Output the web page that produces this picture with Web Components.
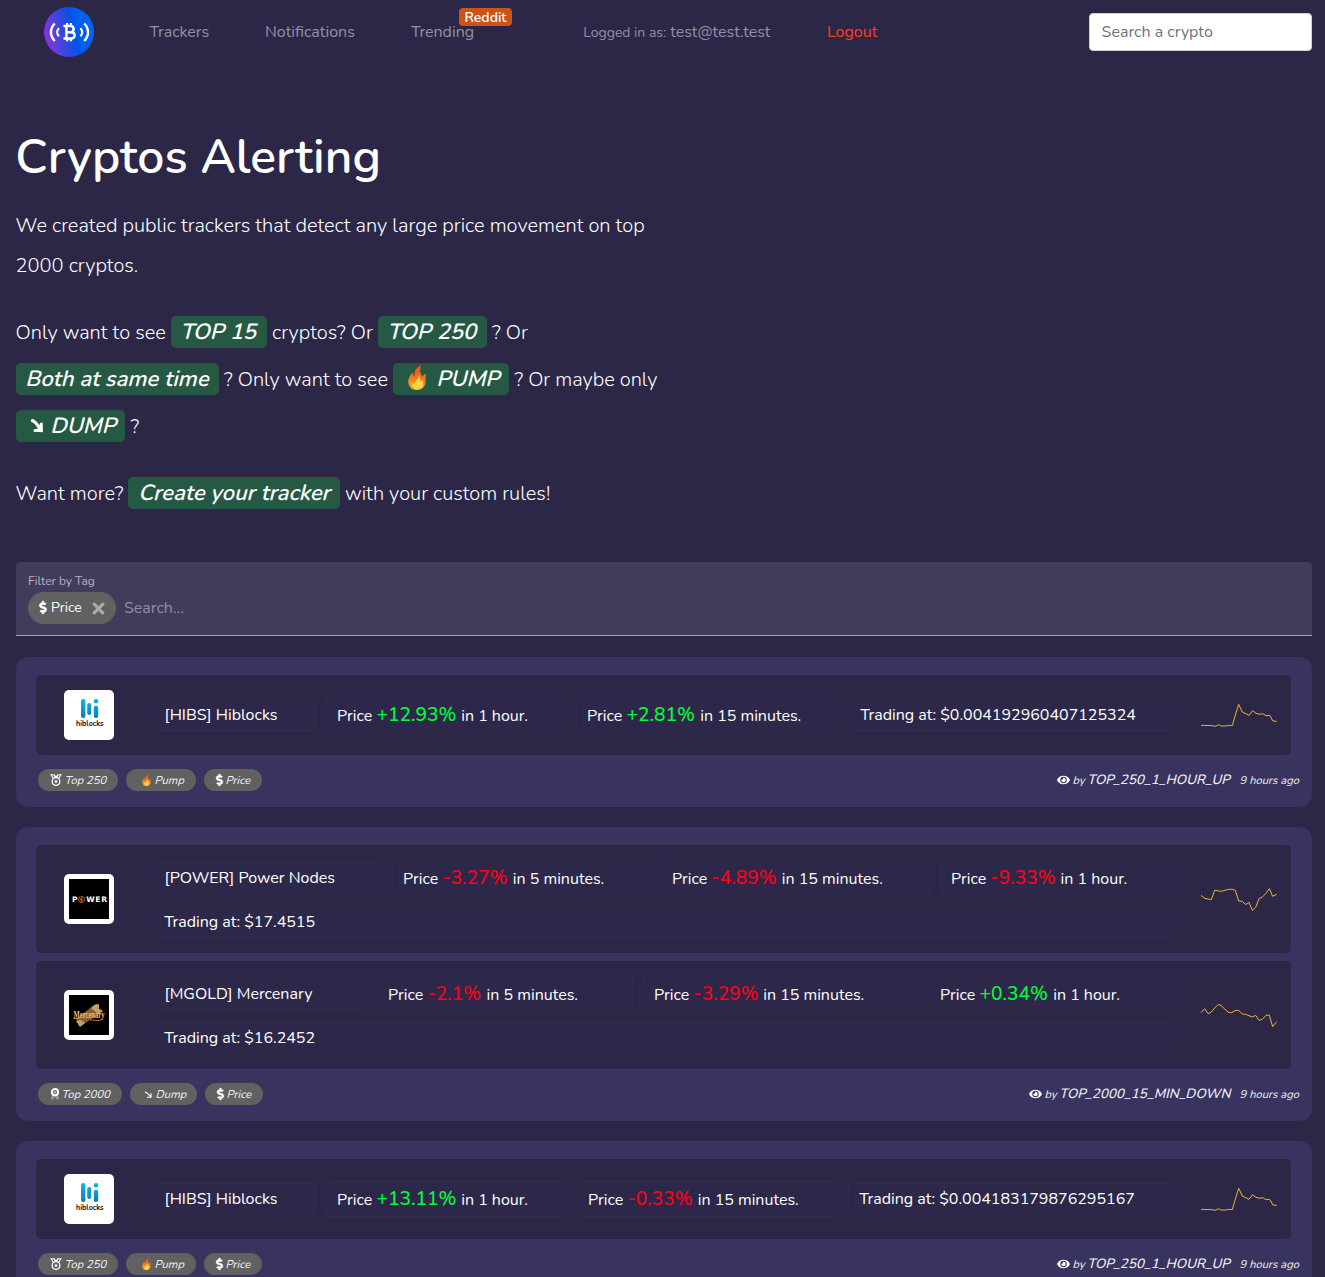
<!DOCTYPE html>
<html lang="en"><head><meta charset="utf-8"><title>Cryptos Alerting</title>
<style>
html,body{margin:0;height:1277px;overflow:hidden;background:#2c2747}
body{font:16px/24px Nunito,Lato,"Open Sans",sans-serif;color:#fff}
</style></head><body><crypto-app></crypto-app>
<script>
const ICONS={
dollar:'<svg viewBox="0 0 288 512" width="100%" height="100%" overflow="visible"><path fill="#fff" stroke="#fff" stroke-width="20" d="M209.2 233.4l-108-31.6C88.7 198.2 80 186.5 80 173.5c0-16.3 13.2-29.5 29.5-29.5h66.3c12.2 0 24.2 3.7 34.2 10.5 6.1 4.1 14.3 3.1 19.5-2l34.8-34c7.1-6.9 6.1-18.4-1.8-24.5C238 74.8 207.4 64.1 176 64V16c0-8.8-7.2-16-16-16h-32c-8.8 0-16 7.2-16 16v48h-2.5C45.8 64-5.4 118.7.5 183.6c4.2 46.1 39.4 83.6 83.8 96.6l102.5 30c12.5 3.7 21.2 15.3 21.2 28.3 0 16.3-13.2 29.5-29.5 29.5h-66.3C100 368 88 364.3 78 357.5c-6.1-4.1-14.3-3.1-19.5 2l-34.8 34c-7.1 6.9-6.1 18.4 1.8 24.5 24.5 19.2 55.1 29.9 86.5 30v48c0 8.8 7.2 16 16 16h32c8.8 0 16-7.2 16-16v-48.2c46.6-.9 90.3-28.6 105.7-72.7 21.5-61.6-14.6-124.8-72.5-141.7z"/></svg>',
eye:'<svg viewBox="0 0 576 512" width="100%" height="100%"><path fill="#fff" d="M572.52 241.4C518.29 135.59 410.93 64 288 64S57.68 135.64 3.48 241.41a32.35 32.35 0 0 0 0 29.19C57.71 376.41 165.07 448 288 448s230.32-71.64 284.52-177.41a32.35 32.35 0 0 0 0-29.19zM288 400a144 144 0 1 1 144-144 143.93 143.93 0 0 1-144 144zm0-240a95.31 95.31 0 0 0-25.31 3.79 47.85 47.85 0 0 1-66.9 66.9A95.78 95.78 0 1 0 288 160z"/></svg>',
flame:'<svg viewBox="0 0 24 32" width="100%" height="100%"><defs><linearGradient id="f" x1=".6" y1="0" x2=".4" y2="1"><stop stop-color="#e8481d"/><stop offset=".55" stop-color="#f47a20"/><stop offset="1" stop-color="#fba62c"/></linearGradient></defs><path fill="url(#f)" d="M18 0C10 3 8 9 9 15 7 14 6 11 7 9 3 13 0 18 1 23c1 6 5 9 11 9s11-4 11-11c0-4 0-7 1-10-3 1-4 2-5 4C16 11 15 5 18 0z"/><path fill="#ffd447" d="M14 13c1 5-5 6-5 11-2 0-3-1-3-3-2 5 1 9 6 10 5 0 8-3 8-7 0-2-1-4-1-5-1 1-2 2-3 2 0-3 0-6-2-8z"/></svg>',
arrow:'<svg viewBox="0 0 14 14" width="100%" height="100%"><path d="M1.2 .8C5 2.5 7.5 5.5 9.5 9" fill="none" stroke="#fff" stroke-width="3.3"/><path fill="#fff" d="M12.6 3.4 13 13.2 3.6 12.8 3.8 10.4 8.6 9.3 10 4z"/></svg>',
thin:'<svg viewBox="0 0 10 10" width="100%" height="100%"><path d="M1 2C4 3.5 6 5.5 7.6 7.6M7.8 3.5V8H3.4" fill="none" stroke="#fff" stroke-width="1.2"/></svg>',
medal:'<svg viewBox="0 0 12 12" width="100%" height="100%"><g fill="none" stroke="#fff"><circle cx="6" cy="7.5" r="3.8" stroke-width="1.3"/><path d="M.5 .7H4L5 2.8 6 3.2 7 2.8 8 .7h3.5M1 .8 3.5 4.5M11 .8 8.5 4.5M4 .7 6 3 8 .7" stroke-width="1.1"/></g><path fill="#fff" d="M6 5.5l.6 1.2 1.3.2-1 .9.3 1.3L6 8.5l-1.2.6.3-1.3-1-.9 1.3-.2z"/></svg>',
rosette:'<svg viewBox="0 0 10 12" width="100%" height="100%"><path fill="#999" d="M2.2 7 .6 11.2l1.8-.3L3.4 12 5 8.2 6.6 12l1-1.1 1.8.3L7.8 7z"/><circle cx="5" cy="4.2" r="3.1" fill="#616161" stroke="#fff" stroke-width="2"/><circle cx="5" cy="4.2" r="1.2" fill="#bbb"/></svg>',
close:'<svg viewBox="0 0 13 13" width="100%" height="100%"><path d="M2.2 2.2 10.8 10.8M10.8 2.2 2.2 10.8" stroke="#aaa" stroke-width="3.2" stroke-linecap="round"/></svg>'
};
function define(name,render){customElements.define(name,class extends HTMLElement{
 connectedCallback(){if(!this.shadowRoot)this.attachShadow({mode:'open'}).innerHTML=render(this);}
});}
/* A run of text in a fixed measure; --slant leans it. */
define('fit-text',e=>`<style>:host{display:inline-block;white-space:pre;flex:none;width:${e.getAttribute('w')}px}span{display:inline-block;transform:var(--slant,none);transform-origin:0 74%}</style><span><slot></slot></span>`);
define('ui-icon',e=>`<style>:host{display:block;flex:none;width:${e.getAttribute('w')}px;height:${e.getAttribute('h')}px}svg{display:block}</style>${ICONS[e.getAttribute('name')]}`);
define('app-logo',()=>`<style>:host{display:block;width:50px;height:50px}svg{display:block}</style>
<svg width="50" height="50" viewBox="0 0 50 50"><defs><linearGradient id="g" x1="0" y1=".62" x2="1" y2=".4"><stop stop-color="#8b34d8"/><stop offset=".62" stop-color="#0053e8"/><stop offset=".64" stop-color="#005cf0"/><stop offset="1" stop-color="#0064f0"/></linearGradient></defs><circle cx="25" cy="25" r="25" fill="url(#g)"/>
<g fill="none" stroke="#fff" stroke-width="2.2"><path d="M10.8 16.5C5.7 21.5 5.7 29 10.8 34M40.2 16.5c5.1 5 5.1 12.5 0 17.5" stroke-width="2.4"/><path d="M15 21.2c-2.4 2.4-2.4 5.6 0 8M36.4 21.2c2.4 2.4 2.4 5.6 0 8"/><g transform="translate(-.6)"><path d="M20 19H27C31.3 19 31.3 25.2 27 25.2H23M20 31.5H27.5C32.5 31.5 32.5 25.2 27.5 25.2M23 19v12.5" stroke-width="2.5"/><path d="M23.8 16v3M27.6 16v3M23.8 31v3.2M27.6 31v3.2"/></g></g></svg>`);
define('nav-bar',()=>`<style>:host{display:flex;height:64px;align-items:center;color:#9391a3;line-height:24px;box-sizing:border-box;padding:0 13px 0 44px}
.item{position:relative;display:flex}.badge{position:absolute;left:48px;top:-12px;width:53px;height:18px;border-radius:4px;background:#cd5416;color:#fff;font-weight:600;font-size:14px;line-height:19px;text-align:center}
.search{margin-left:auto;width:223px;height:38px;box-sizing:border-box;border:1px solid #ced4da;border-radius:4px;background:#fff;color:#6c757d;padding:6px 11.6px}small{font-size:14px}</style>
<app-logo></app-logo><span class="item" style="margin-left:55.6px"><fit-text w="60">Trackers</fit-text></span><span class="item" style="margin-left:55.4px"><fit-text w="91">Notifications</fit-text></span>
<span class="item" style="margin-left:55px"><fit-text w="64">Trending</fit-text><span class="badge">Reddit</span></span>
<span class="item" style="margin-left:108.2px;align-items:baseline;gap:4px"><small><fit-text w="83">Logged in as:</fit-text></small><fit-text w="101">test@test.test</fit-text></span>
<span class="item" style="margin-left:55.8px;color:#ff3c22"><fit-text w="51">Logout</fit-text></span><div class="search"><fit-text w="111">Search a crypto</fit-text></div>`);
define('hero-tag',e=>`<style>:host{--slant:skewX(-14deg);display:flex;gap:8px;box-sizing:border-box;width:${e.getAttribute('w')}px;height:32px;border-radius:5px;background:#255943;font:600 22px/32px Nunito,Lato,sans-serif;padding-left:9.5px;color:#fff;flex:none}</style><slot></slot>`);
define('hero-intro',()=>`<style>:host{display:block;padding:64px 16px 0 15.6px;height:434px;font-weight:300;font-size:20px}
h1{font-size:48px;line-height:58px;font-weight:600;margin:0 0 20px -.4px}p{margin:0;line-height:40px}.row{display:flex;height:47px;gap:5px;line-height:33px}.first{margin-top:30px}.last{margin-top:20px}.lead{margin-left:.4px}ui-icon{margin-top:3px}</style>
<h1><fit-text w="366">Cryptos Alerting</fit-text></h1>
<p><fit-text w="629">We created public trackers that detect any large price movement on top</fit-text><br><fit-text w="123">2000 cryptos.</fit-text></p>
<div class="row first"><fit-text w="150.4">Only want to see</fit-text><hero-tag w="96"><fit-text w="77">TOP 15</fit-text></hero-tag><fit-text w="101">cryptos? Or</fit-text><hero-tag w="109"><fit-text w="89">TOP 250</fit-text></hero-tag><fit-text w="37">? Or</fit-text></div>
<div class="row"><hero-tag class="lead" w="203"><fit-text w="184">Both at same time</fit-text></hero-tag><fit-text w="164">? Only want to see</fit-text><hero-tag w="116"><ui-icon name="flame" w="24" h="25" style="margin:2px -1.3px 0 2.4px"></ui-icon><fit-text w="66">PUMP</fit-text></hero-tag><fit-text w="145" style="margin-left:.4px">? Or maybe only</fit-text></div>
<div class="row"><hero-tag class="lead" w="109"><ui-icon name="arrow" w="14" h="14" style="margin:9px -2.4px 0 4.5px"></ui-icon><fit-text w="66">DUMP</fit-text></hero-tag><fit-text w="12" style="margin-left:.4px">?</fit-text></div>
<div class="row last"><fit-text w="107.4">Want more?</fit-text><hero-tag w="212"><fit-text w="193" style="margin-left:.5px">Create your tracker</fit-text></hero-tag><fit-text w="206">with your custom rules!</fit-text></div>`);
define('tag-filter',()=>`<style>:host{display:block;box-sizing:border-box;margin:0 13px 0 16px;height:74px;border-radius:4px 4px 0 0;background:#433b5b;border-bottom:1px solid #aaa5b7;padding:10px 12px}.label{font-size:12px;line-height:18px;height:20px;color:#b6b2c1}.line{display:flex;gap:8px;align-items:center;color:#928da1}.chip{display:flex;align-items:center;width:88px;height:32px;box-sizing:border-box;border-radius:16px;background:#616161;color:#fff;font-size:14px;padding:0 11px}</style>
<div class="label"><fit-text w="67">Filter by Tag</fit-text></div><div class="line"><span class="chip"><ui-icon name="dollar" w="8" h="13" style="margin:-1px 0 0 .3px"></ui-icon><fit-text w="31" style="margin-left:3.7px">Price</fit-text><ui-icon name="close" w="13" h="13" style="margin:1px 0 0 9.7px"></ui-icon></span><fit-text w="60">Search...</fit-text></div>`);
const LOGOS={
hibs:'<rect width="50" height="50" rx="5" fill="#fff"/><defs><linearGradient id="h" gradientUnits="userSpaceOnUse" x1="0" y1="9" x2="0" y2="28"><stop stop-color="#10b9df"/><stop offset="1" stop-color="#087db9"/></linearGradient></defs><g fill="url(#h)"><rect x="17" y="9" width="4.4" height="19" rx="2"/><rect x="23.2" y="13" width="4" height="12" rx="2"/><rect x="29.8" y="15.7" width="4.4" height="12.3" rx="2"/><circle cx="32" cy="11.3" r="2.3"/></g><text x="12" y="36.4" font-size="6.8" font-weight="700" font-family="Nunito,sans-serif" textLength="27.5" lengthAdjust="spacingAndGlyphs" fill="#111">hiblocks</text>',
power:'<rect width="50" height="50" rx="5" fill="#fff"/><path d="M5 5h40v40H5z"/><g font-family="DejaVu Sans,sans-serif" font-weight="700" font-size="7.6" fill="#fff"><text x="8" y="28">P</text><text x="22.2" y="28" textLength="21" lengthAdjust="spacing">WER</text></g><circle cx="17.6" cy="25.5" r="3" fill="none" stroke="#b95c25" stroke-width="1.2" stroke-dasharray="2 .6"/><path d="m18.2 23.2-1.8 2.5h2l-1.2 2.4" fill="none" stroke="#f28a32" stroke-width=".9"/>',
gold:'<rect width="50" height="50" rx="5" fill="#fff"/><path d="M5 5h40v40H5z"/><path fill="#80612f" d="m12 29 18-14 5-1v5l4 2-19 13-5 2-1-4z"/><path fill="#c4a267" d="m27 18 5-4 3 1v4l4 2-5 3zM12 31l5-1 4 3-5 4z"/><path fill="none" stroke="#d07a3c" d="M26 30c3-1 9 3 13-2M9.5 28.5h6"/><text x="9.5" y="28" font-family="Liberation Serif,serif" font-weight="700" font-size="10.5" textLength="31" lengthAdjust="spacingAndGlyphs" fill="#f2bb75">Mercenary</text>'};
define('coin-logo',e=>`<style>:host,svg{display:block;width:50px;height:50px;flex:none;overflow:visible}</style><svg viewBox="0 0 50 50">${LOGOS[e.getAttribute('name')]}</svg>`);
define('data-box',e=>`<style>:host{display:flex;align-items:baseline;gap:5px;box-sizing:border-box;width:${e.getAttribute('w')}px;height:${e.getAttribute('h')||32}px;border:1px solid #312c4d;border-radius:3px;background:#2d2849;padding:${e.getAttribute('h')?'5px':'3px'} 10px;color:#fff;line-height:24px}</style><slot></slot>`);
define('spark-line',e=>`<style>:host,svg{display:block;width:78px;height:26px;flex:none}</style><svg viewBox="${e.getAttribute('box')}"><polyline points="${e.getAttribute('points')}" fill="none" stroke="#edb33d" stroke-width="3" stroke-linejoin="round"/></svg>`);
const name=(t,w,tw)=>`<data-box w="${w}"><fit-text style="margin-left:.6px" w="${tw}">${t}</fit-text></data-box>`;
const price=(v,vw,t,tw,w)=>`<data-box w="${w}" h="36"><fit-text w="36">Price</fit-text><fit-text w="${vw}" style="margin-left:-1.5px;margin-right:-.3px;font-size:19.2px;font-weight:500;color:${v[0]=='+'?'#00ff37':'#ff0019'}">${v}</fit-text><fit-text w="${tw}">${t}</fit-text></data-box>`;
const trade=(v,w,tw)=>`<data-box w="${w}"><fit-text w="${tw}" style="margin-left:.2px">Trading at: $${v}</fit-text></data-box>`;
const SP={a:['1140 156 234 78','1143,226 1175,227 1187,229 1195,224 1203,228 1217,228 1229,226 1237,227 1246,195 1256,163 1267,186 1277,191 1287,196 1298,182 1308,190 1320,193 1328,191 1338,197 1349,196 1359,213 1370,214'],b:['900 198 234 78','903,226 914,235 934,239 944,211 964,214 985,208 997,208 1006,211 1016,243 1027,244 1037,254 1047,247 1057,271 1067,262 1077,236 1088,230 1098,220 1108,206 1118,229 1130,223'],c:['900 546 234 78','903,578 914,566 924,581 934,576 944,564 955,553 965,558 975,568 985,577 995,578 1005,572 1016,571 1027,582 1037,583 1057,591 1067,586 1077,601 1087,598 1098,586 1108,585 1118,620 1130,605']};
const coin=(l,s,b,h=80)=>`<coin-row logo="${l}" spark="${s}" h="${h}">${b}</coin-row>`;
define('coin-row',e=>{const s=SP[e.getAttribute('spark')];return `<style>:host{display:flex;align-items:center;box-sizing:border-box;height:${e.getAttribute('h')}px;border-radius:5px;background:#2c2747;padding:0 13px 0 28px}.facts{display:flex;flex-wrap:wrap;gap:10px;align-items:center;width:1021px;margin:0 26px 0 39px}</style><coin-logo name="${e.getAttribute('logo')}"></coin-logo><div class="facts"><slot></slot></div><spark-line box="${s[0]}" points="${s[1]}"></spark-line>`});
define('tag-pill',e=>`<style>:host{--slant:skewX(-14deg);display:flex;align-items:center;box-sizing:border-box;width:${e.getAttribute('w')}px;height:22px;border-radius:11px;background:#616161;padding-left:12px;color:#f5f5f5;font:11.2px/22px Nunito,Lato,sans-serif}</style><slot></slot>`);
const pill=(i,iw,ih,t,w,tw,m=0)=>`<tag-pill w="${w}"><ui-icon name="${i}" w="${iw}" h="${ih}" style="margin-left:${m}px;margin-right:${i=='rosette'?1:1.5}px"></ui-icon><fit-text w="${tw}" style="margin-top:1.4px">${t}</fit-text></tag-pill>`;
define('alert-card',e=>`<style>:host{display:flex;flex-direction:column;margin:0 13px 20px 16px;padding:18px 21px 16px 20px;border-radius:12px;background:#39345f}.rows{display:flex;flex-direction:column;gap:8px}.foot{display:flex;justify-content:space-between;margin:14px -8px 0 2px;height:22px}.tags{display:flex;gap:8px}.by{--slant:skewX(-14deg);display:flex;align-items:baseline;font-size:11.2px;line-height:22px;color:#f0f0f5}</style><div class="rows"><slot></slot></div><div class="foot"><div class="tags"><slot name="tags"></slot></div><div class="by"><ui-icon name="eye" w="13" h="12" style="align-self:center;margin-right:2px"></ui-icon><fit-text w="12">by</fit-text><fit-text w="${e.getAttribute('tw')}" style="font-size:13.44px;font-weight:500;margin:0 7.5px 0 3px">${e.getAttribute('tracker')}</fit-text><fit-text w="60.5">9 hours ago</fit-text></div></div>`);
const tags=p=>`<span slot="tags" style="display:flex;gap:8px">${p}</span>`;
const upTags=tags(pill('medal',12,12,'Top 250',80,42)+pill('flame',11,12,'Pump',70,30,3)+pill('dollar',7,12,'Price',58,25));
const H='in 1 hour.',M='in 15 minutes.',F='in 5 minutes.';
define('crypto-app',()=>`<style>:host{display:block;height:1277px;overflow:hidden}.feed{padding-top:21px}</style><nav-bar></nav-bar><hero-intro></hero-intro><tag-filter></tag-filter><div class="feed">
<alert-card tracker="TOP_250_1_HOUR_UP" tw="144">${coin('hibs','a',name('[HIBS] Hiblocks',163,114)+price('+12.93%',80,H,67,240)+price('+2.81%',69,M,102,263)+trade('0.004192960407125324',325,277))}${upTags}</alert-card>
<alert-card tracker="TOP_2000_15_MIN_DOWN" tw="172">${coin('power','b',name('[POWER] Power Nodes',229,172)+price('-3.27%',65.6,F,92,259)+price('-4.89%',65.6,M,102,269)+price('-9.33%',65.4,H,67,234)+trade('17.4515',1021,152),108)}${coin('gold','c',name('[MGOLD] Mercenary',214,149)+price('-2.1%',54.4,F,92,256)+price('-3.29%',65,M,102,276)+price('+0.34%',69,H,67,245)+trade('16.2452',1021,152),108)}${tags(pill('rosette',10,12,'Top 2000',84,49)+pill('thin',9,9,'Dump',67,31,2)+pill('dollar',7,12,'Price',58,25))}</alert-card>
<alert-card tracker="TOP_250_1_HOUR_UP" tw="144">${coin('hibs','a',name('[HIBS] Hiblocks',163,114)+price('+13.11%',80,H,67,241)+price('-0.33%',65.5,M,102,261)+trade('0.004183179876295167',326,277))}${upTags}</alert-card></div>`);
</script></body></html>
